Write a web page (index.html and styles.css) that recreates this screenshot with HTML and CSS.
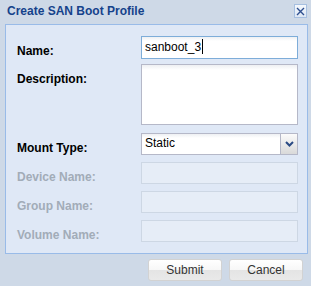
FILE: index.html
```html
<!DOCTYPE html>
<html lang="en">
<head>
    <meta charset="UTF-8">
    <meta name="viewport" content="width=device-width, initial-scale=1.0">
    <title>Create SAN Boot Profile</title>
    <link rel="stylesheet" href="styles.css">
</head>
<body>
    <div class="window">
        <div class="window-header">
            <span class="window-title">Create SAN Boot Profile</span>
            <span class="close-btn">
                <svg width="9" height="9" viewBox="0 0 9 9">
                    <path d="M1 1 L8 8 M8 1 L1 8" stroke="#2f4f8f" stroke-width="1.4" fill="none"/>
                </svg>
            </span>
        </div>

        <div class="panel">
            <div class="row row-name">
                <label class="field-label">Name:</label>
                <div class="text-field focused">sanboot_3<span class="caret"></span></div>
            </div>
            <div class="row row-desc">
                <label class="field-label">Description:</label>
                <div class="text-area"></div>
            </div>
            <div class="row">
                <label class="field-label">Mount Type:</label>
                <div class="combo">
                    <span class="combo-value">Static</span>
                    <span class="combo-trigger">
                        <svg width="9" height="6" viewBox="0 0 9 6">
                            <path d="M1 1 L4.5 4.5 L8 1" stroke="#2b4b84" stroke-width="2" fill="none"/>
                        </svg>
                    </span>
                </div>
            </div>
            <div class="row">
                <label class="field-label disabled">Device Name:</label>
                <div class="text-field disabled"></div>
            </div>
            <div class="row">
                <label class="field-label disabled">Group Name:</label>
                <div class="text-field disabled"></div>
            </div>
            <div class="row">
                <label class="field-label disabled">Volume Name:</label>
                <div class="text-field disabled"></div>
            </div>
        </div>

        <div class="buttons">
            <button class="btn">Submit</button>
            <button class="btn">Cancel</button>
        </div>
    </div>
</body>
</html>
```

FILE: styles.css
```css
body {
    margin: 0;
    padding: 0;
    font-family: "Liberation Sans", Arial, sans-serif;
    font-size: 12px;
    background-color: #ced9e7;
}
.window {
    width: 311px;
    height: 286px;
    background-color: #ced9e7;
}
.window-header {
    display: flex;
    justify-content: space-between;
    align-items: flex-start;
    height: 24px;
    padding: 0 4px 0 7px;
    box-sizing: border-box;
}
.window-title {
    margin-top: 4px;
    font-weight: bold;
    font-size: 12px;
    line-height: 14px;
    color: #15428b;
}
.close-btn {
    display: flex;
    align-items: center;
    justify-content: center;
    width: 11px;
    height: 12px;
    margin-top: 4px;
    border: 1px solid #a6bfe0;
    background: linear-gradient(#f4f8fd, #dde7f4);
}
.panel {
    margin: 0 3px 0 5px;
    height: 230px;
    box-sizing: border-box;
    border: 1px solid #99bbe8;
    background-color: #dfe8f6;
    padding: 11px 9px 0 0;
}
.row {
    display: flex;
    margin-bottom: 7px;
}
.row-name {
    margin-bottom: 5px;
}
.row-desc {
    margin-bottom: 8px;
}
.field-label {
    width: 124px;
    padding: 8px 0 0 11px;
    font-weight: bold;
    line-height: 14px;
    color: #000;
}
.field-label.disabled {
    color: #a2acb8;
}
.text-field {
    flex: 1;
    height: 22px;
    box-sizing: border-box;
    border: 1px solid #b5b8c8;
    background: linear-gradient(#eef0f3, #fff 4px);
    padding: 0 3px;
    line-height: 20px;
    color: #000;
}
.text-field.focused {
    height: 23px;
    border-color: #7eadd9;
    line-height: 21px;
}
.text-field.disabled {
    border-color: #cdd7e4;
    background: #e6edf7;
}
.caret {
    display: inline-block;
    width: 1px;
    height: 15px;
    margin-left: 1px;
    vertical-align: -3px;
    background-color: #000;
}
.text-area {
    flex: 1;
    height: 61px;
    box-sizing: border-box;
    border: 1px solid #b5b8c8;
    background: linear-gradient(#eef0f3, #fff 5px);
}
.combo {
    flex: 1;
    display: flex;
    height: 22px;
    box-sizing: border-box;
    border: 1px solid #b5b8c8;
    background: linear-gradient(#eef0f3, #fff 4px);
}
.combo-value {
    flex: 1;
    padding: 0 3px;
    line-height: 19px;
}
.combo-trigger {
    display: flex;
    align-items: center;
    justify-content: center;
    width: 16px;
    border-left: 1px solid #b5b8c8;
    background: linear-gradient(#fbfbfb, #d9d9d9);
}
.buttons {
    display: flex;
    justify-content: flex-end;
    gap: 7px;
    padding: 5px 8px 0 0;
}
.btn {
    width: 74px;
    height: 22px;
    padding: 0;
    font-family: "Liberation Sans", Arial, sans-serif;
    font-size: 12px;
    color: #333;
    border: 1px solid #d2d2d2;
    border-radius: 3px;
    background: linear-gradient(#ffffff 0%, #f7f7f7 50%, #e4e4e4 51%, #e9e9e9 100%);
    cursor: pointer;
}
```
